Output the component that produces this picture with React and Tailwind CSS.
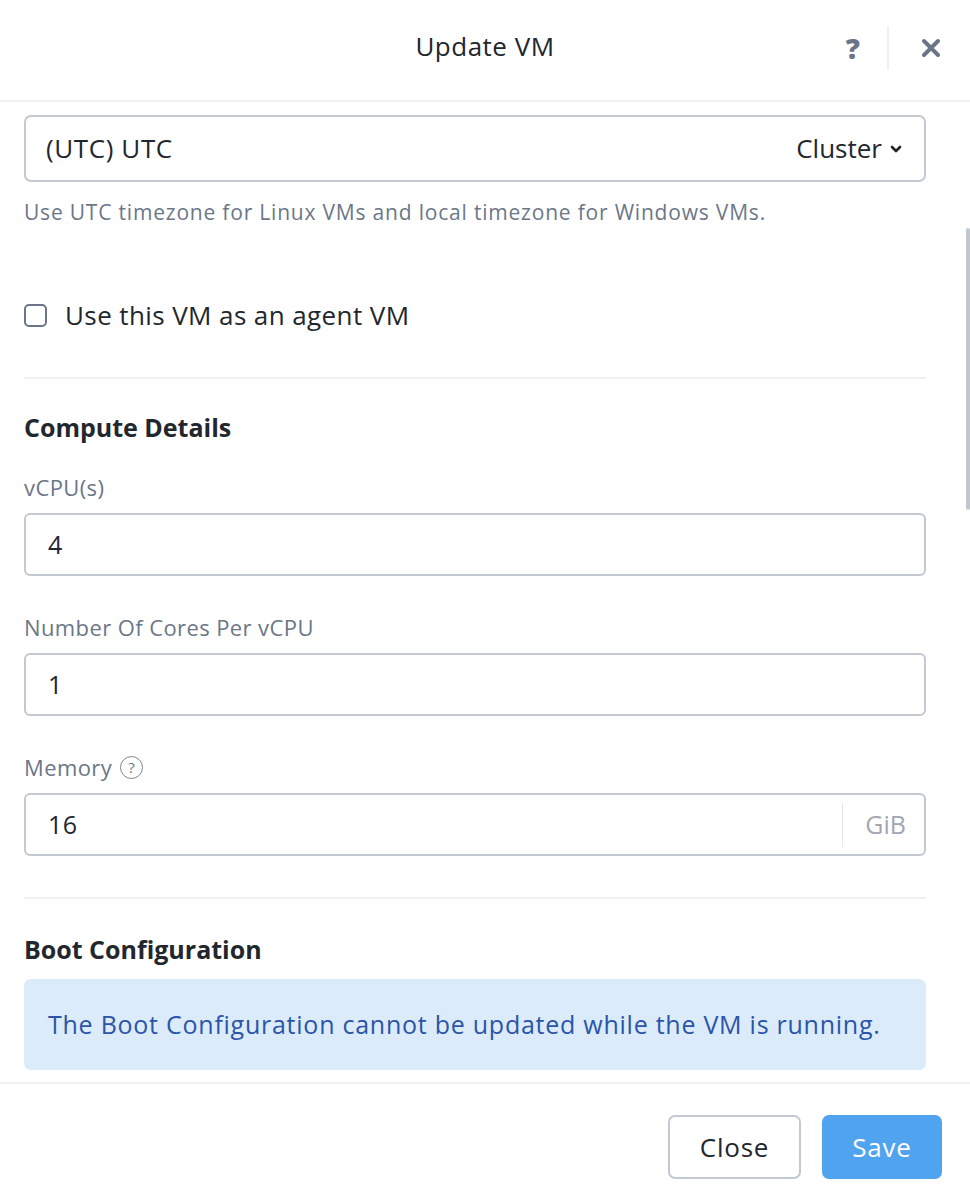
import { ChevronDown } from 'lucide-react';

const font = { fontFamily: '"Open Sans", Lato, sans-serif' };

function Field({ label, value, suffix, help }) {
  return (
    <div>
      <div className="flex items-center gap-[8px] text-[22px] tracking-[0.4px] leading-[26px] text-[#6b7788] mb-[13px]">
        <span>{label}</span>
        {help && (
          <span className="w-[23px] h-[23px] rounded-full border-[1.5px] border-[#7b8594] text-[15px] leading-none flex items-center justify-center text-[#6b7788]">
            ?
          </span>
        )}
      </div>
      <div className="h-[63px] border-2 border-[#c3c8d1] rounded-[6px] flex items-center bg-white">
        <span className="flex-1 pl-[22px] text-[25px] tracking-[0.4px] text-[#22272e]">{value}</span>
        {suffix && (
          <div className="h-[44px] border-l border-[#e6e8ec] flex items-center pl-[22px] pr-[18px] text-[25px] text-[#a0a7b2]">
            {suffix}
          </div>
        )}
      </div>
    </div>
  );
}

export default function App() {
  return (
    <div className="w-[970px] h-[1194px] bg-white flex flex-col overflow-hidden relative" style={font}>
      {/* Header */}
      <div className="h-[102px] shrink-0 border-b-2 border-[#f0f1f3] flex items-center relative">
        <h1 className="absolute left-0 right-0 top-[29px] text-center text-[26px] tracking-[0.5px] leading-[34px] text-[#22272e]">Update VM</h1>
        <div className="ml-auto flex items-center h-full pr-[29px] pb-[4px] relative">
          <span className="text-[28px] font-extrabold text-[#6b7587] mr-[27px]">?</span>
          <div className="w-[2px] h-[44px] bg-[#eef0f2] mr-[32px]" />
          <svg width="20" height="20" viewBox="0 0 20 20">
            <path d="M3 3 L17 17 M17 3 L3 17" stroke="#6b7587" strokeWidth="4" strokeLinecap="round" />
          </svg>
        </div>
      </div>

      {/* Body */}
      <div className="flex-1 overflow-hidden px-[24px] pr-[44px] pt-[13px] relative">
        <div className="h-[67px] border-2 border-[#c3c8d1] rounded-[7px] flex items-center px-[20px]">
          <span className="flex-1 text-[26px] tracking-[0.6px] text-[#22272e]">(UTC) UTC</span>
          <span className="text-[26px] text-[#22272e] mr-[6px]">Cluster</span>
          <ChevronDown size={16} strokeWidth={4} className="text-[#22272e]" />
        </div>
        <p className="mt-[16px] text-[21px] tracking-[0.8px] leading-[28px] text-[#6b7788]">
          Use UTC timezone for Linux VMs and local timezone for Windows VMs.
        </p>

        <label className="mt-[74px] h-[30px] flex items-center gap-[18px]">
          <span className="w-[23px] h-[23px] rounded-[5px] border-2 border-[#6b7587]" />
          <span className="text-[26px] tracking-[0.4px] leading-[30px] text-[#22272e]">Use this VM as an agent VM</span>
        </label>

        <div className="mt-[47px] border-t-2 border-[#f0f1f3]" />

        <h2 className="mt-[33px] text-[25px] leading-[30px] font-bold text-[#22272e]">Compute Details</h2>

        <div className="mt-[32px] flex flex-col gap-[38px]">
          <Field label="vCPU(s)" value="4" />
          <Field label="Number Of Cores Per vCPU" value="1" />
          <Field label="Memory" value="16" suffix="GiB" help />
        </div>

        <div className="mt-[41px] border-t-2 border-[#f0f1f3]" />

        <h2 className="mt-[35px] text-[25px] leading-[30px] font-bold text-[#22272e]">Boot Configuration</h2>

        <div className="mt-[15px] h-[91px] rounded-[7px] bg-[#dbebfa] flex items-center px-[24px] text-[25px] tracking-[0.75px] text-[#2b55a8]">
          The Boot Configuration cannot be updated while the VM is running.
        </div>

        {/* scrollbar */}
        <div className="absolute right-0 top-[126px] w-[4px] h-[282px] rounded-full bg-[#c2c7cf]" />
      </div>

      {/* Footer */}
      <div className="h-[112px] shrink-0 border-t-2 border-[#f0f1f3] flex items-start justify-end gap-[21px] pr-[28px] pt-[31px]">
        <button className="w-[133px] h-[64px] rounded-[7px] border-2 border-[#c3c8d1] bg-white text-[26px] tracking-[0.8px] text-[#22272e]">
          Close
        </button>
        <button className="w-[120px] h-[64px] rounded-[7px] bg-[#50a3ef] text-[26px] tracking-[0.8px] text-white">
          Save
        </button>
      </div>
    </div>
  );
}
